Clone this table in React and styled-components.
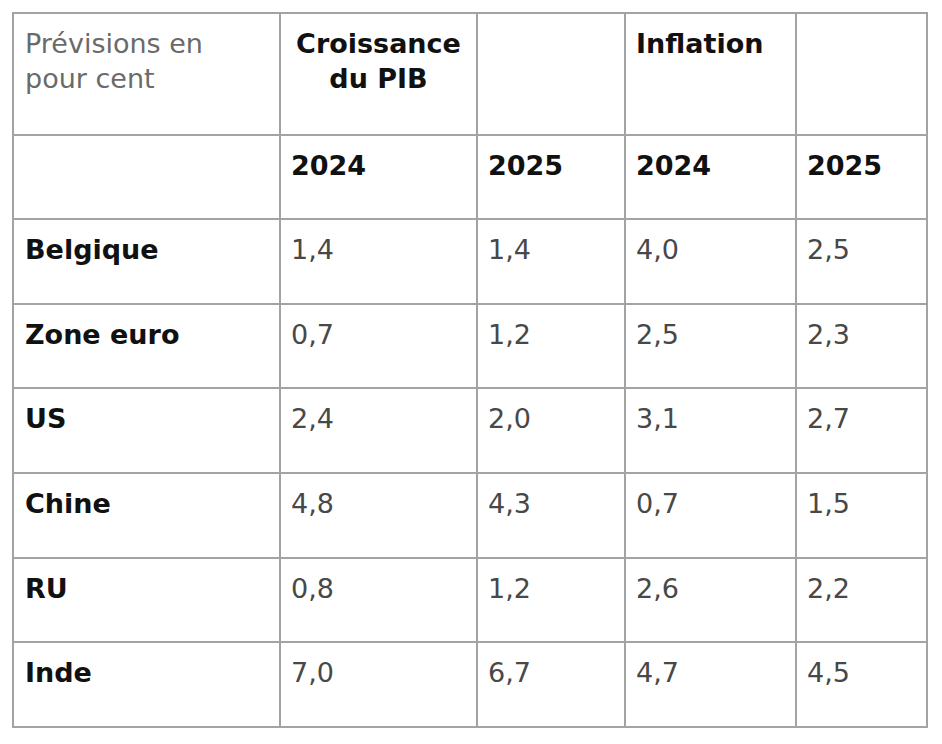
import styled, { createGlobalStyle } from 'styled-components'

const GlobalStyle = createGlobalStyle`
  body {
    margin: 12px;
    background: #fff;
    font-family: "DejaVu Sans", "Noto Sans", sans-serif;
  }
`

const Table = styled.table`
  border-collapse: collapse;
  table-layout: fixed;
  width: 914px;
  font-size: 27px;
  line-height: 35px;
`

const Row = styled.tr`
  height: ${(p) => p.$height}px;
`

const Cell = styled.td`
  border: 2px solid #a3a3a3;
  vertical-align: top;
  padding: 12px 10px 0 10px;
  color: ${(p) => (p.$bold ? '#111' : '#484848')};
  font-weight: ${(p) => (p.$bold ? 700 : 400)};
  text-align: ${(p) => (p.$center ? 'center' : 'left')};
`

const Caption = styled(Cell)`
  color: #6a6a6a;
  padding-left: 11px;
`

const Label = styled(Cell)`
  padding-left: 11px;
`

const widths = [267, 197, 148, 171, 131]

const rows = [
  ['Belgique', '1,4', '1,4', '4,0', '2,5'],
  ['Zone euro', '0,7', '1,2', '2,5', '2,3'],
  ['US', '2,4', '2,0', '3,1', '2,7'],
  ['Chine', '4,8', '4,3', '0,7', '1,5'],
  ['RU', '0,8', '1,2', '2,6', '2,2'],
  ['Inde', '7,0', '6,7', '4,7', '4,5'],
]

export default function App() {
  return (
    <>
      <GlobalStyle />
      <Table>
        <colgroup>
          {widths.map((w, i) => (
            <col key={i} style={{ width: w }} />
          ))}
        </colgroup>
        <tbody>
          <Row $height={122}>
            <Caption>
              Prévisions en
              <br />
              pour cent
            </Caption>
            <Cell $bold $center>
              Croissance
              <br />
              du PIB
            </Cell>
            <Cell />
            <Cell $bold>Inflation</Cell>
            <Cell />
          </Row>
          <Row $height={84}>
            <Cell />
            <Cell $bold>2024</Cell>
            <Cell $bold>2025</Cell>
            <Cell $bold>2024</Cell>
            <Cell $bold>2025</Cell>
          </Row>
          {rows.map(([name, ...vals]) => (
            <Row key={name} $height={84.7}>
              <Label $bold>{name}</Label>
              {vals.map((v, i) => (
                <Cell key={i}>{v}</Cell>
              ))}
            </Row>
          ))}
        </tbody>
      </Table>
    </>
  )
}
